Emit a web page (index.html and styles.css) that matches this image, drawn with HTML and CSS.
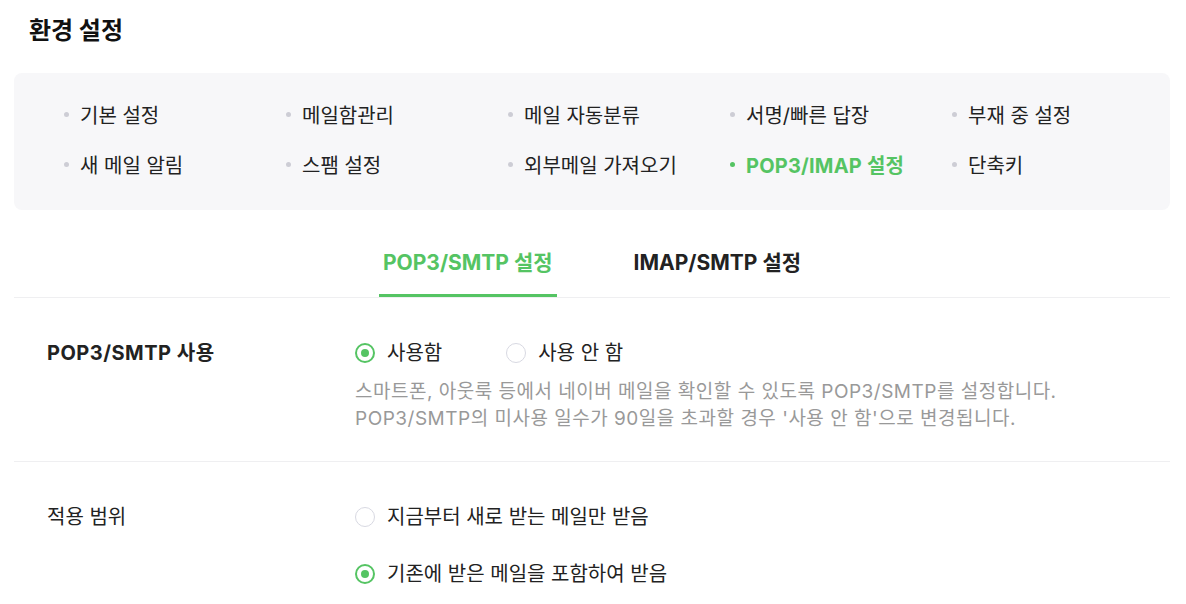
FILE: index.html
```html
<!DOCTYPE html>
<html lang="ko">
<head>
<meta charset="utf-8">
<link rel="stylesheet" href="styles.css">
</head>
<body>
<div class="page">
  <h1 class="title">환경 설정</h1>
  <nav class="menu">
    <ul class="menu-grid">
      <li class="menu-item">기본 설정</li>
      <li class="menu-item">메일함관리</li>
      <li class="menu-item">메일 자동분류</li>
      <li class="menu-item">서명/빠른 답장</li>
      <li class="menu-item">부재 중 설정</li>
      <li class="menu-item">새 메일 알림</li>
      <li class="menu-item">스팸 설정</li>
      <li class="menu-item">외부메일 가져오기</li>
      <li class="menu-item active">POP3/IMAP 설정</li>
      <li class="menu-item">단축키</li>
    </ul>
  </nav>
  <div class="tabs">
    <div class="tab active">POP3/SMTP 설정</div>
    <div class="tab">IMAP/SMTP 설정</div>
  </div>
  <section class="row">
    <div class="label bold">POP3/SMTP 사용</div>
    <div class="value">
      <div class="radio-line">
        <label class="radio checked"><span class="circle"></span>사용함</label>
        <label class="radio"><span class="circle"></span>사용 안 함</label>
      </div>
      <p class="desc">스마트폰, 아웃룩 등에서 네이버 메일을 확인할 수 있도록 POP3/SMTP를 설정합니다.<br>POP3/SMTP의 미사용 일수가 90일을 초과할 경우 '사용 안 함'으로 변경됩니다.</p>
    </div>
  </section>
  <section class="row">
    <div class="label">적용 범위</div>
    <div class="value stack">
      <label class="radio"><span class="circle"></span>지금부터 새로 받는 메일만 받음</label>
      <label class="radio checked"><span class="circle"></span>기존에 받은 메일을 포함하여 받음</label>
    </div>
  </section>
</div>
</body>
</html>
```
FILE: styles.css
```css
* { box-sizing: border-box; }
html, body { margin: 0; padding: 0; background: #fff; }
body {
  font-family: Inter, "Noto Sans CJK KR", "Noto Sans", sans-serif;
  color: #222;
}
.page { padding: 0 16px 0 14px; }
.title {
  margin: 0;
  padding: 17px 0 0 15px;
  height: 73px;
  font-size: 24px;
  line-height: 28px;
  font-weight: 700;
  color: #111;
}
.menu {
  background: #f7f7f9;
  border-radius: 8px;
  padding: 16px 0 21px 50px;
}
.menu-grid {
  list-style: none;
  margin: 0;
  padding: 0;
  display: grid;
  grid-template-columns: repeat(5, 222px);
  grid-auto-rows: 50px;
}
.menu-item {
  display: flex;
  align-items: center;
  gap: 11px;
  font-size: 20px;
  color: #222;
}
.menu-item::before {
  content: "";
  width: 5px;
  height: 5px;
  border-radius: 50%;
  background: #cdcdd5;
  flex: none;
}
.menu-item.active { color: #55c463; font-weight: 700; letter-spacing: 0.2px; }
.menu-item.active::before { background: #55c463; }

.tabs {
  margin-top: 20px;
  display: flex;
  justify-content: center;
  gap: 73px;
  border-bottom: 1px solid #efeff1;
}
.tab {
  padding: 20px 4px 18px;
  font-size: 21px;
  line-height: 26px;
  font-weight: 700;
  color: #222;
  border-bottom: 3px solid transparent;
}
.tab.active { color: #55c463; border-bottom-color: #55c463; }

.row {
  display: flex;
  padding: 42px 0 29px 33px;
  border-bottom: 1px solid #efeff1;
}
.row:last-child { border-bottom: none; }
.label {
  width: 308px;
  flex: none;
  font-size: 20px;
  line-height: 26px;
  color: #222;
}
.label.bold { font-weight: 700; letter-spacing: 0.5px; }
.value { flex: 1; }
.radio-line { display: flex; gap: 64px; }
.stack { display: flex; flex-direction: column; gap: 31px; }
.radio {
  display: flex;
  align-items: center;
  gap: 12px;
  font-size: 20px;
  line-height: 26px;
  color: #222;
}
.circle {
  width: 20px;
  height: 20px;
  border-radius: 50%;
  border: 1.5px solid #d8d9e2;
  background: #fff;
  display: flex;
  align-items: center;
  justify-content: center;
  flex: none;
}
.radio.checked .circle { border: 2px solid #55c463; }
.radio.checked .circle::after {
  content: "";
  width: 8px;
  height: 8px;
  border-radius: 50%;
  background: #55c463;
}
.desc {
  margin: 12px 0 0;
  font-size: 19px;
  line-height: 27px;
  color: #999;
  letter-spacing: 0.5px;
}
```
